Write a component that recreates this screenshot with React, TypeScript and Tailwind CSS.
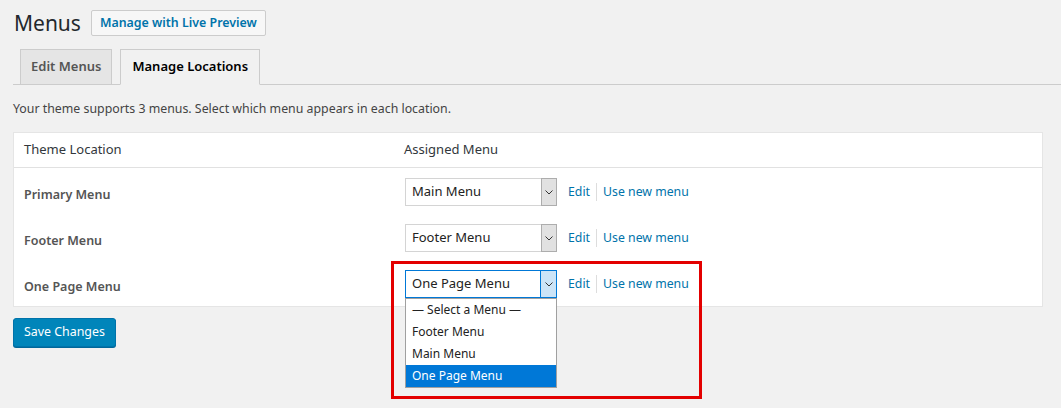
import React from "react";

const ROWS = [
  { name: "Primary Menu", value: "Main Menu", open: false },
  { name: "Footer Menu", value: "Footer Menu", open: false },
  { name: "One Page Menu", value: "One Page Menu", open: true },
];

const OPTIONS = ["— Select a Menu —", "Footer Menu", "Main Menu", "One Page Menu"];

function Chevron() {
  return (
    <svg width="8" height="5" viewBox="0 0 8 5" fill="none">
      <path d="M0.5 0.5 L4 4 L7.5 0.5" stroke="#333" strokeWidth="1" />
    </svg>
  );
}

function MenuSelect({ value, open }: { value: string; open: boolean }) {
  return (
    <div className="relative">
      <div
        className={
          "flex h-[28px] w-[152px] items-stretch border bg-white " +
          (open ? "border-[#0078d7]" : "border-[#d4d4d4]")
        }
      >
        <span className="flex flex-1 items-center pl-[6px] text-[13px] text-[#222]">
          {value}
        </span>
        <span
          className={
            "flex w-[16px] items-center justify-center border-l " +
            (open
              ? "border-[#0078d7] bg-[#cce4f7]"
              : "border-[#adadad] bg-[#e1e1e1] my-[-1px] mr-[-1px] border")
          }
        >
          <Chevron />
        </span>
      </div>
      {open && (
        <ul className="absolute left-0 top-[28px] z-10 w-[152px] border border-[#a0a0a0] bg-white text-[12px] text-[#222]">
          {OPTIONS.map((o) => (
            <li
              key={o}
              className={
                "flex h-[22px] items-center pl-[6px] " +
                (o === value ? "bg-[#0078d7] text-white" : "")
              }
            >
              {o}
            </li>
          ))}
        </ul>
      )}
    </div>
  );
}

export default function App() {
  return (
    <div
      className="relative min-h-[408px] bg-[#f1f1f1] pl-[13px] pr-[18px] text-[12.4px] text-[#444]"
      style={{ fontFamily: '"Noto Sans", "Open Sans", sans-serif' }}
    >
      <div className="flex items-center gap-[10px] pt-[10px]">
        <h1 className="pl-[1px] text-[21px] leading-[26px] text-[#23282d]">Menus</h1>
        <button className="h-[26px] rounded-[2px] border border-[#ccc] bg-[#f7f7f7] px-[8px] text-[12.4px] font-semibold text-[#0073aa]">
          Manage with Live Preview
        </button>
      </div>

      <div className="mr-[-18px] mt-[13px] flex items-end gap-[8px] border-b border-[#ccc] pl-[7px]">
        <div className="mb-[-1px] flex h-[36px] items-center border border-[#ccc] bg-[#e5e5e5] px-[10px] text-[13px] font-semibold text-[#555]">
          Edit Menus
        </div>
        <div className="mb-[-1px] flex h-[36px] items-center border border-[#ccc] border-b-[#f1f1f1] bg-[#f1f1f1] px-[11px] text-[13px] font-semibold text-[#000]">
          Manage Locations
        </div>
      </div>

      <p className="mt-[15px] text-[12.35px] leading-[18px] text-[#444]">
        Your theme supports 3 menus. Select which menu appears in each location.
      </p>

      <div className="mt-[14px] border border-[#e5e5e5] bg-white">
        <div className="flex h-[35px] items-center border-b border-[#e1e1e1] text-[13px] text-[#32373c]">
          <div className="w-[380px] pl-[10px]">Theme Location</div>
          <div className="pl-[10px]">Assigned Menu</div>
        </div>
        {ROWS.map((r) => (
          <div key={r.name} className="flex h-[46px] items-start pt-[10px]">
            <div className="mt-[8px] w-[391px] pl-[10px] text-[12.5px] font-semibold leading-[18px] text-[#555]">
              {r.name}
            </div>
            <MenuSelect value={r.value} open={r.open} />
            <div className="flex h-[28px] items-center pl-[11px] text-[12.3px] text-[#0073aa]">
              <span>Edit</span>
              <span className="mx-[6px] h-[18px] w-px bg-[#ddd]" />
              <span>Use new menu</span>
            </div>
          </div>
        ))}
      </div>

      <button className="mt-[11px] h-[29px] rounded-[3px] border border-[#0073aa] bg-[#0085ba] px-[10px] text-[12.4px] text-white shadow-[0_1px_0_#006799]">
        Save Changes
      </button>

      <div className="pointer-events-none absolute left-[391px] top-[261px] h-[138px] w-[311px] border-[3px] border-[#e30000]" />
    </div>
  );
}
